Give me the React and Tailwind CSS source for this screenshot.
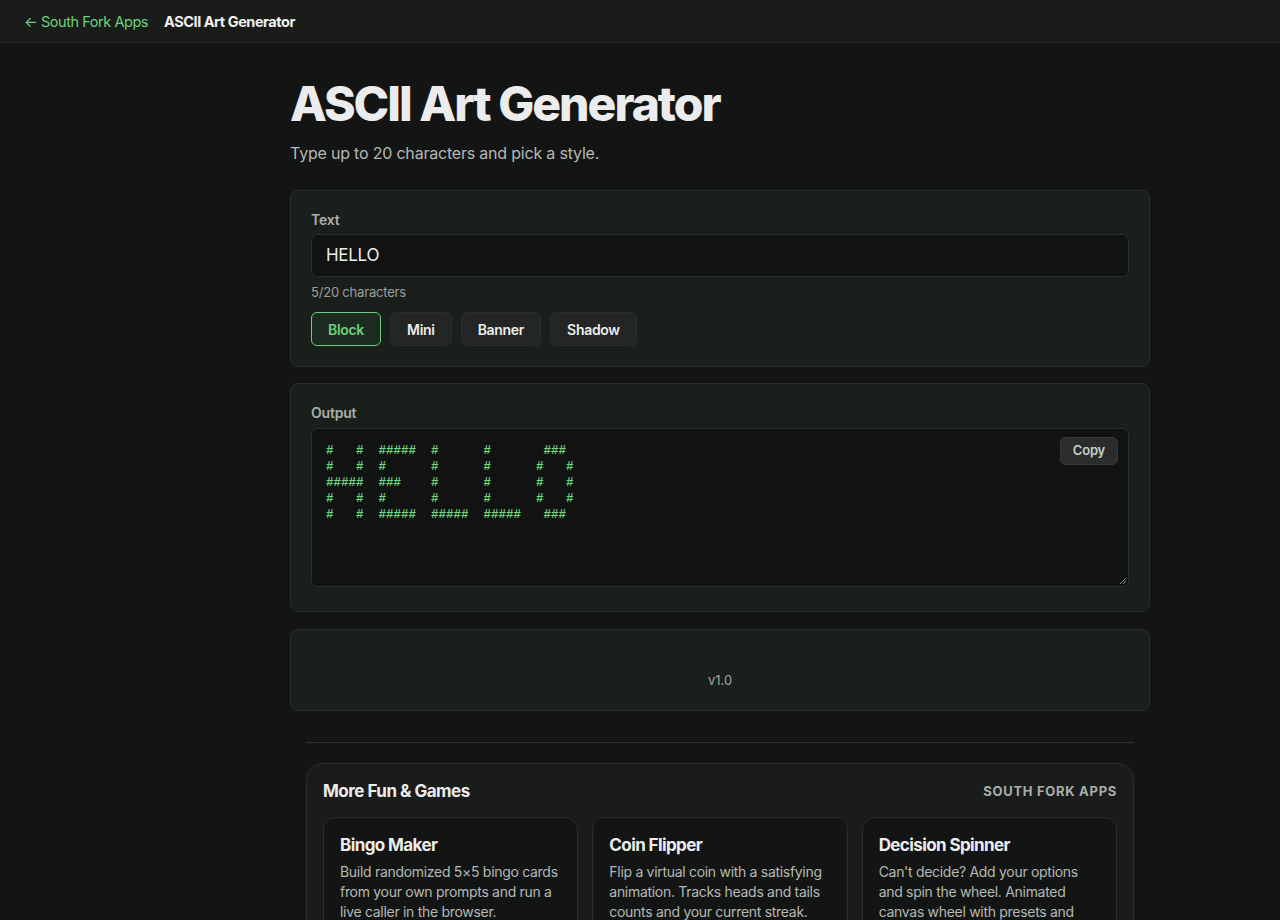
import React from "react";

const ASCII = [
  "#   #  #####  #      #       ### ",
  "#   #  #      #      #      #   #",
  "#####  ###    #      #      #   #",
  "#   #  #      #      #      #   #",
  "#   #  #####  #####  #####   ### ",
].join("\n");

const styles = ["Block", "Mini", "Banner", "Shadow"];

const apps = [
  {
    title: "Bingo Maker",
    desc: "Build randomized 5×5 bingo cards from your own prompts and run a live caller in the browser.",
  },
  {
    title: "Coin Flipper",
    desc: "Flip a virtual coin with a satisfying animation. Tracks heads and tails counts and your current streak.",
  },
  {
    title: "Decision Spinner",
    desc: "Can't decide? Add your options and spin the wheel. Animated canvas wheel with presets and history.",
  },
];

export default function App() {
  return (
    <div
      className="min-h-[920px] bg-[#131514] text-[#ececec]"
      style={{ fontFamily: "Inter, 'Noto Sans', sans-serif" }}
    >
      <header className="h-[43px] border-b border-[#262a27] bg-[#1a1c1a] flex items-center px-6 gap-4 pt-[1px]">
        <a className="text-[14.5px] text-[#6fcf7e] tracking-[-0.45px]">← South Fork Apps</a>
        <span className="text-[14.5px] font-bold text-[#f0f0f0] tracking-[-0.45px]">ASCII Art Generator</span>
      </header>

      <div className="flex">
        <aside className="w-[160px] shrink-0" />
        <main className="flex-1 flex flex-col items-center pt-[33px]">
          <div className="w-[860px]">
            <h1 className="text-[48px] leading-[56px] font-extrabold tracking-[-2px] text-[#ececec]">
              ASCII Art Generator
            </h1>
            <p className="mt-[9px] text-[16px] leading-[24px] text-[#b4b9b5] tracking-[-0.2px]">
              Type up to 20 characters and pick a style.
            </p>

            <section className="mt-[25px] rounded-lg border border-[#2a2e2b] bg-[#1b1f1c] px-5 pt-[20px] pb-[20px]">
              <label className="block text-[14px] font-semibold text-[#a9aea9] tracking-[-0.2px] leading-[18px]">Text</label>
              <div className="mt-[5px] h-[43px] rounded-md border border-[#2a2e2b] bg-[#111312] flex items-center px-[14px] text-[17px] text-[#ececec] tracking-[-0.3px]">
                HELLO
              </div>
              <div className="mt-[7px] text-[13px] text-[#9a9f9b] leading-[16px] tracking-[-0.2px]">5/20 characters</div>
              <div className="mt-[12px] flex gap-[9px]">
                {styles.map((s, i) => (
                  <button
                    key={s}
                    className={
                      i === 0
                        ? "h-[34px] px-4 rounded-md border border-[#6fcf7e] bg-[#1d2a20] text-[14px] font-semibold text-[#6fcf7e] tracking-[-0.3px]"
                        : "h-[34px] px-4 rounded-md border border-[#2a2e2b] bg-[#232624] text-[14px] font-semibold text-[#ececec] tracking-[-0.3px]"
                    }
                  >
                    {s}
                  </button>
                ))}
              </div>
            </section>

            <section className="mt-[16px] rounded-lg border border-[#2a2e2b] bg-[#1b1f1c] px-5 pt-[20px] pb-[24px]">
              <label className="block text-[14px] font-semibold text-[#a9aea9] tracking-[-0.2px] leading-[18px]">Output</label>
              <div className="relative mt-[6px] h-[159px] rounded-md border border-[#2a2e2b] bg-[#111312]">
                <pre
                  className="px-[14px] pt-[14px] text-[12.5px] leading-[16px] font-bold text-[#72d481]"
                  style={{ fontFamily: "'Liberation Mono', 'DejaVu Sans Mono', monospace" }}
                >
                  {ASCII}
                </pre>
                <button className="absolute right-[10px] top-[8px] h-[28px] px-[12px] rounded-md border border-[#363a37] bg-[#2a2d2b] text-[13px] font-semibold text-[#c9cdc9] tracking-[-0.2px]">
                  Copy
                </button>
                <svg className="absolute right-[1px] bottom-[1px]" width="8" height="8" viewBox="0 0 8 8">
                  <path d="M7 1L1 7M7 4L4 7" stroke="#8a8f8b" strokeWidth="1" />
                </svg>
              </div>
            </section>

            <section className="mt-[17px] h-[82px] rounded-lg border border-[#2a2e2b] bg-[#1b1f1c] flex items-end justify-center pb-[20px]">
              <span className="text-[13px] text-[#a0a5a0]">v1.0</span>
            </section>
          </div>

          <div className="w-[828px] mt-[31px] border-t border-[#2e322f]" />

          <section className="w-[828px] mt-[20px] rounded-2xl border border-[#2a2d2b] bg-[#1a1c1b] px-4 pt-[16px] pb-6">
            <div className="flex items-center justify-between h-[24px]">
              <h2 className="text-[17px] font-bold text-[#ececec] tracking-[-0.5px]">More Fun &amp; Games</h2>
              <span className="text-[13px] font-bold tracking-[0.7px] text-[#a9aea9]">SOUTH FORK APPS</span>
            </div>
            <div className="mt-[13px] grid grid-cols-3 gap-[14px]">
              {apps.map((a) => (
                <div key={a.title} className="rounded-xl border border-[#2a2d2b] bg-[#131514] px-4 pt-[15px] pb-4">
                  <h3 className="text-[17px] font-bold text-[#ececec] tracking-[-0.6px] leading-[24px]">{a.title}</h3>
                  <p className="mt-[5px] text-[14px] leading-[20px] text-[#b4b9b5] tracking-[-0.3px]">{a.desc}</p>
                </div>
              ))}
            </div>
          </section>
        </main>
      </div>
    </div>
  );
}
